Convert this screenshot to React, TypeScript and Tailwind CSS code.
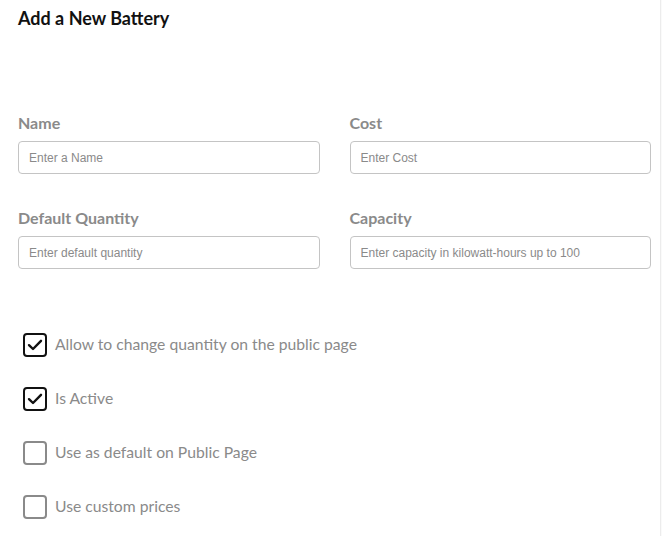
import { useState } from 'react';

const fields = [
  [
    { label: 'Name', placeholder: 'Enter a Name' },
    { label: 'Cost', placeholder: 'Enter Cost' },
  ],
  [
    { label: 'Default Quantity', placeholder: 'Enter default quantity' },
    { label: 'Capacity', placeholder: 'Enter capacity in kilowatt-hours up to 100' },
  ],
];

const options = [
  { label: 'Allow to change quantity on the public page', checked: true },
  { label: 'Is Active', checked: true },
  { label: 'Use as default on Public Page', checked: false },
  { label: 'Use custom prices', checked: false },
];

function Checkbox({ label, initial }: { label: string; initial: boolean }) {
  const [on, setOn] = useState(initial);
  return (
    <label className="flex items-center h-[24px] cursor-pointer" onClick={() => setOn(!on)}>
      <span
        className={`ml-[5px] w-[24px] h-[24px] rounded-[4px] border-2 flex items-center justify-center ${
          on ? 'border-[#111]' : 'border-[#8a8a8a]'
        }`}
      >
        {on && (
          <svg width="18" height="18" viewBox="0 0 18 18" fill="none">
            <path d="M3 9.2 7 13 15 4.8" stroke="#111" strokeWidth="2.4" strokeLinecap="round" strokeLinejoin="round" />
          </svg>
        )}
      </span>
      <span className="ml-[8px] text-[15.7px] text-[#8a8a8a]">{label}</span>
    </label>
  );
}

export default function App() {
  return (
    <div className="flex h-[536px] w-[662px] bg-[#fafafa] font-['Lato','Noto_Sans',sans-serif]">
      <div className="w-[661px] h-full bg-white border-r border-[#ececec] pl-[18px] pr-[9px]">
        <h1 className="pt-[6px] text-[18px] font-bold text-[#111] leading-[24px]">Add a New Battery</h1>

        {/* Inputs */}
        <div className="mt-[81px] flex flex-col gap-[32px]">
          {fields.map((row, i) => (
            <div key={i} className="grid grid-cols-2 gap-[30px]">
              {row.map((f) => (
                <div key={f.label} className="flex flex-col">
                  <span className="text-[16px] font-bold text-[#8a8a8a] leading-[24px]">{f.label}</span>
                  <input
                    placeholder={f.placeholder}
                    className="mt-[6px] h-[33px] w-full rounded-[4px] border border-[#c4c4c4] px-[10px] text-[12px] font-['Liberation_Sans',sans-serif] text-[#333] placeholder:text-[#8a8a8a] outline-none"
                  />
                </div>
              ))}
            </div>
          ))}
        </div>

        {/* Options */}
        <div className="mt-[64px] flex flex-col gap-[30px]">
          {options.map((o) => (
            <Checkbox key={o.label} label={o.label} initial={o.checked} />
          ))}
        </div>
      </div>
    </div>
  );
}
